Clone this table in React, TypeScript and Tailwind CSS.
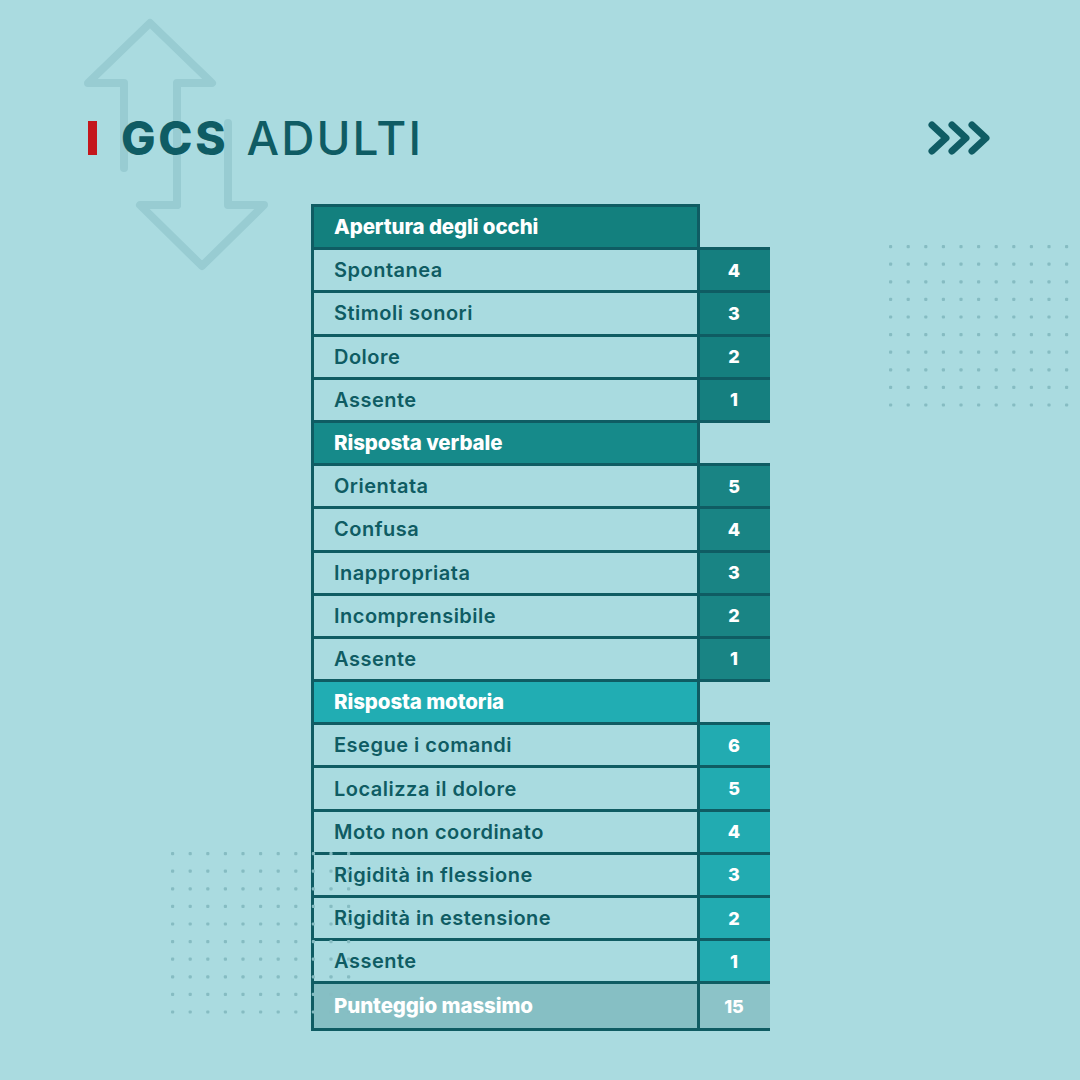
import React from "react";

type Row =
  | { kind: "head"; label: string; tone: 1 | 2 | 3 }
  | { kind: "item"; label: string; score: string; tone: 1 | 2 | 3 }
  | { kind: "total"; label: string; score: string };

const rows: Row[] = [
  { kind: "head", label: "Apertura degli occhi", tone: 1 },
  { kind: "item", label: "Spontanea", score: "4", tone: 1 },
  { kind: "item", label: "Stimoli sonori", score: "3", tone: 1 },
  { kind: "item", label: "Dolore", score: "2", tone: 1 },
  { kind: "item", label: "Assente", score: "1", tone: 1 },
  { kind: "head", label: "Risposta verbale", tone: 2 },
  { kind: "item", label: "Orientata", score: "5", tone: 2 },
  { kind: "item", label: "Confusa", score: "4", tone: 2 },
  { kind: "item", label: "Inappropriata", score: "3", tone: 2 },
  { kind: "item", label: "Incomprensibile", score: "2", tone: 2 },
  { kind: "item", label: "Assente", score: "1", tone: 2 },
  { kind: "head", label: "Risposta motoria", tone: 3 },
  { kind: "item", label: "Esegue i comandi", score: "6", tone: 3 },
  { kind: "item", label: "Localizza il dolore", score: "5", tone: 3 },
  { kind: "item", label: "Moto non coordinato", score: "4", tone: 3 },
  { kind: "item", label: "Rigidità in flessione", score: "3", tone: 3 },
  { kind: "item", label: "Rigidità in estensione", score: "2", tone: 3 },
  { kind: "item", label: "Assente", score: "1", tone: 3 },
  { kind: "total", label: "Punteggio massimo", score: "15" },
];

const headBg: Record<number, string> = {
  1: "bg-[#13807e]",
  2: "bg-[#168a8a]",
  3: "bg-[#21adb3]",
};
const scoreBg: Record<number, string> = {
  1: "bg-[#157f7f]",
  2: "bg-[#198484]",
  3: "bg-[#22abb1]",
};

function Dots({ cols, rows }: { cols: number; rows: number }) {
  const dots = [];
  for (let r = 0; r < rows; r++) {
    for (let c = 0; c < cols; c++) {
      dots.push(
        <rect
          key={`${r}-${c}`}
          x={c * 17.6}
          y={r * 17.6}
          width={3.2}
          height={3.2}
          rx={1}
          fill="#86bcc2"
        />
      );
    }
  }
  return (
    <svg width={(cols - 1) * 17.6 + 4} height={(rows - 1) * 17.6 + 4}>
      {dots}
    </svg>
  );
}

export default function App() {
  const font = { fontFamily: "Inter, 'Liberation Sans', sans-serif" };
  return (
    <div
      className="relative w-[1080px] h-[1080px] overflow-hidden bg-[#aadbe0]"
      style={font}
    >
      {/* background arrows */}
      <svg
        className="absolute left-0 top-0"
        width={300}
        height={300}
        fill="none"
        stroke="#98ccd2"
        strokeWidth={8}
        strokeLinejoin="round"
        strokeLinecap="round"
      >
        <path d="M124 168 L124 83 L88 83 L150 23 L212 83 L177 83 L177 205" />
        <path d="M228 123 L228 205 L264 205 L202 266 L140 205 L177 205" />
      </svg>

      {/* dot grids */}
      <div className="absolute left-[889px] top-[245px]">
        <Dots cols={11} rows={10} />
      </div>
      <div className="absolute left-[171px] top-[852px] z-10">
        <Dots cols={11} rows={10} />
      </div>

      {/* title */}
      <div className="relative flex items-center justify-between pl-[88px] pr-[85px] pt-[118px] h-[158px]">
        <div className="flex items-center">
          <div className="w-[9px] h-[34px] bg-[#c4161c]" />
          <span className="ml-[24px] text-[46px] leading-none font-extrabold tracking-[0.06em] text-[#0f5c64]">
            GCS
          </span>
          <span className="ml-[18px] text-[46px] leading-none font-medium tracking-[0.045em] text-[#0f5c64]">
            ADULTI
          </span>
        </div>
        <svg
          width={68}
          height={36}
          viewBox="0 0 68 36"
          fill="none"
          stroke="#0f5c64"
          strokeWidth={7}
          strokeLinecap="round"
          strokeLinejoin="round"
        >
          <path d="M5 5 L19 18 L5 31" />
          <path d="M25 5 L39 18 L25 31" />
          <path d="M45 5 L59 18 L45 31" />
        </svg>
      </div>

      {/* table */}
      <div className="relative ml-[311px] mt-[49px] w-[459px] flex flex-col">
        {rows.map((row, i) => {
          const first = i === 0;
          if (row.kind === "head") {
            return (
              <div key={i} className="flex h-[43.2px]">
                <div
                  className={`w-[389px] flex items-center pl-[20px] border-l-[3px] border-r-[3px] border-b-[3px] border-[#0f5c63] ${
                    first ? "border-t-[3px] h-[46.2px] -mt-[3px]" : ""
                  } ${headBg[row.tone]}`}
                >
                  <span className="text-[20.5px] font-extrabold tracking-[-0.005em] text-white">
                    {row.label}
                  </span>
                </div>
                <div className="w-[70px] border-b-[3px] border-[#0f5c63]" />
              </div>
            );
          }
          if (row.kind === "item") {
            return (
              <div key={i} className="flex h-[43.2px]">
                <div className="w-[389px] flex items-center pl-[20px] border-l-[3px] border-r-[3px] border-b-[3px] border-[#0f5c63] bg-[#a9dbe0]">
                  <span className="text-[20px] font-semibold tracking-[0.025em] text-[#0f5c63]">
                    {row.label}
                  </span>
                </div>
                <div
                  className={`w-[70px] flex items-center justify-center border-b-[3px] border-[#0f5c63] ${scoreBg[row.tone]}`}
                >
                  <span className="text-[18px] font-extrabold text-white pr-[2px]">
                    {row.score}
                  </span>
                </div>
              </div>
            );
          }
          return (
            <div key={i} className="flex h-[47px]">
              <div className="w-[389px] flex items-center pl-[20px] border-l-[3px] border-r-[3px] border-b-[3px] border-[#0f5c63] bg-[#86bfc4]">
                <span className="text-[20.5px] font-extrabold tracking-[-0.005em] text-white">
                  {row.label}
                </span>
              </div>
              <div className="w-[70px] flex items-center justify-center border-b-[3px] border-[#0f5c63] bg-[#8cc3c8]">
                <span className="text-[18px] font-extrabold text-white pr-[2px]">
                  {row.score}
                </span>
              </div>
            </div>
          );
        })}
      </div>
    </div>
  );
}
